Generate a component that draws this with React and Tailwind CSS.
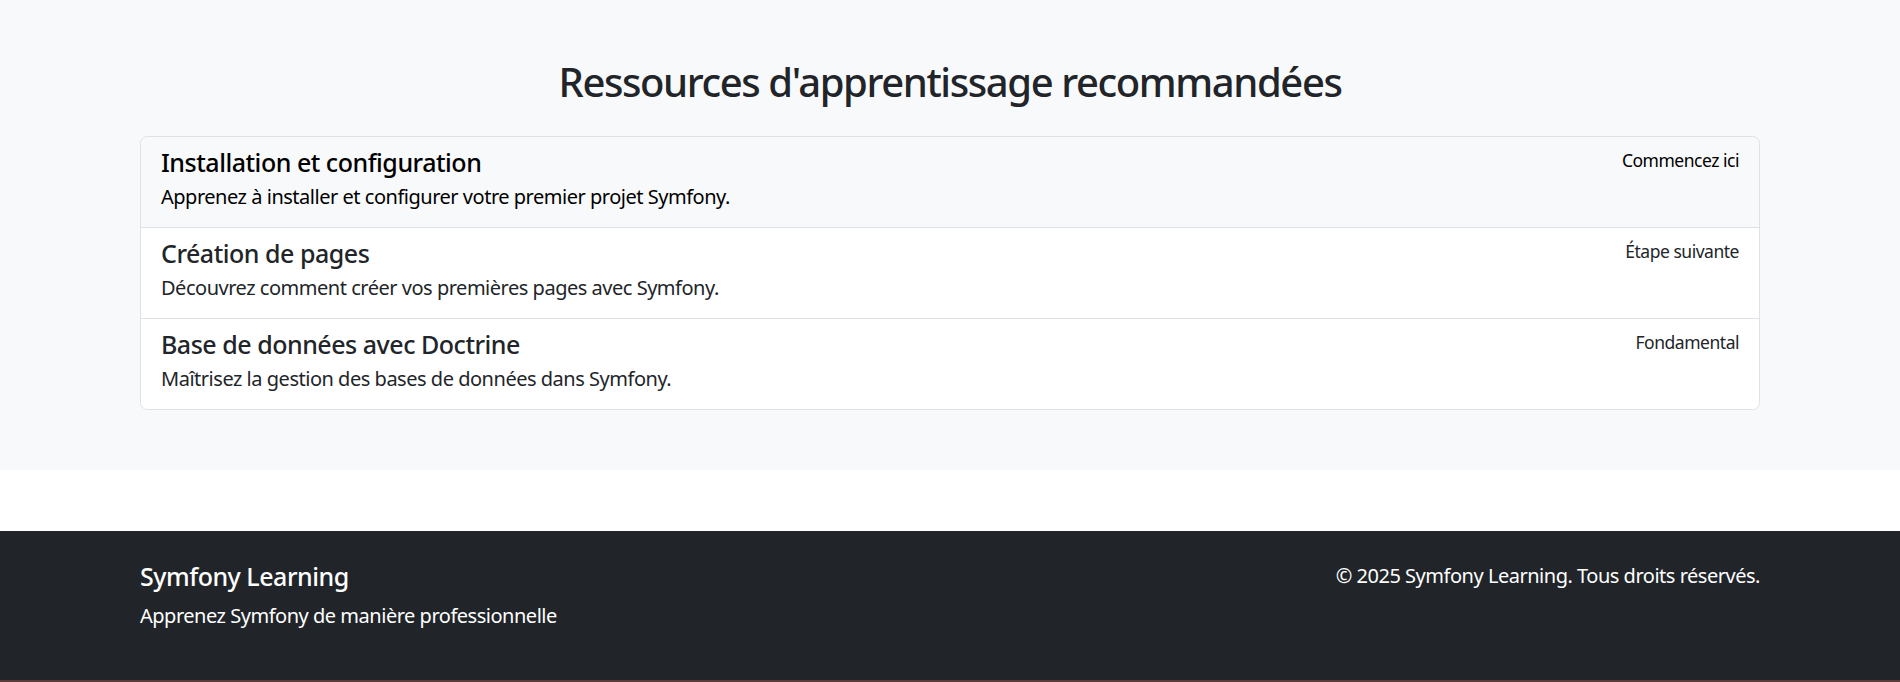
const resources = [
  {
    title: "Installation et configuration",
    text: "Apprenez à installer et configurer votre premier projet Symfony.",
    tag: "Commencez ici",
    highlight: true,
  },
  {
    title: "Création de pages",
    text: "Découvrez comment créer vos premières pages avec Symfony.",
    tag: "Étape suivante",
  },
  {
    title: "Base de données avec Doctrine",
    text: "Maîtrisez la gestion des bases de données dans Symfony.",
    tag: "Fondamental",
  },
];

function ResourceItem({ item, last }) {
  return (
    <div
      className={`px-[20px] py-[10px] ${last ? "" : "border-b border-[#dee2e6]"} ${
        item.highlight ? "bg-[#f8f9fa] text-black" : "bg-white text-[#212529]"
      }`}
    >
      <div className="flex justify-between items-start">
        <h5 className="text-[25px] leading-[30px] font-medium mb-[5px]">{item.title}</h5>
        <small className="text-[17.5px] leading-[26px]">{item.tag}</small>
      </div>
      <p className="text-[20px] leading-[30px] mb-[5px]">{item.text}</p>
    </div>
  );
}

export default function App() {
  return (
    <div className="min-h-[682px] bg-white text-[#212529] font-['Noto_Sans',sans-serif] tracking-[-0.03em]">
      <section className="bg-[#f8f9fa] pt-[58px] pb-[60px]">
        <div className="w-[1620px] mx-auto">
          <h2 className="text-center text-[40px] leading-[48px] tracking-[-0.035em] font-medium mb-[30px]">
            Ressources d'apprentissage recommandées
          </h2>
          <div className="border border-[#dee2e6] rounded-[7.5px] overflow-hidden">
            {resources.map((r, i) => (
              <ResourceItem key={r.title} item={r} last={i === resources.length - 1} />
            ))}
          </div>
        </div>
      </section>

      <footer className="bg-[#212529] text-white mt-[61px] pt-[30px] pb-[49px] border-b-2 border-[#5c3b3b]">
        <div className="w-[1620px] mx-auto flex justify-between items-start">
          <div>
            <h5 className="text-[25px] leading-[30px] font-medium mb-[10px]">Symfony Learning</h5>
            <p className="text-[20px] leading-[30px]">Apprenez Symfony de manière professionnelle</p>
          </div>
          <p className="text-[20px] leading-[30px] text-right">
            © 2025 Symfony Learning. Tous droits réservés.
          </p>
        </div>
      </footer>
    </div>
  );
}
